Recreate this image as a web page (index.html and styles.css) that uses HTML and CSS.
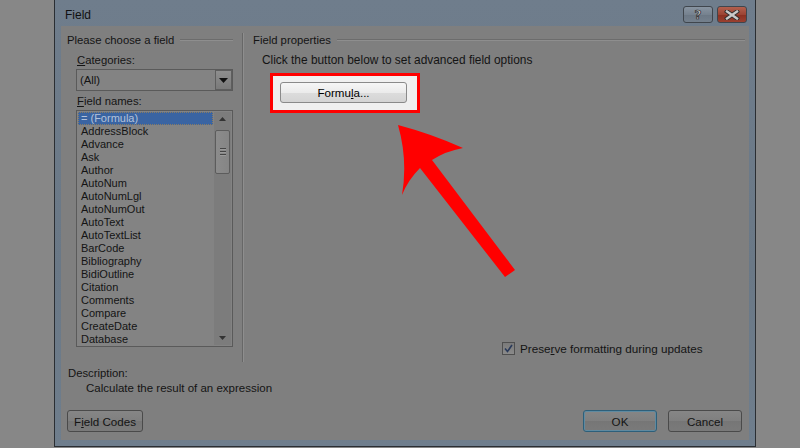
FILE: index.html
```html
<!DOCTYPE html>
<html>
<head>
<meta charset="utf-8">
<link rel="stylesheet" href="styles.css">
</head>
<body>
<div class="screen">
  <div class="dialog">
    <div class="titlebar">
      <span class="title">Field</span>
      <div class="tb-btns">
        <span class="tb-btn help"><span class="qmark">?</span></span>
        <span class="tb-btn close">
          <svg width="16" height="10" viewBox="0 0 16 10"><path d="M3 1.5 L13 8.5 M13 1.5 L3 8.5" stroke="#2e2e2e" stroke-width="4.2" stroke-linecap="square"/><path d="M3 1.5 L13 8.5 M13 1.5 L3 8.5" stroke="#c9c9c9" stroke-width="2.4" stroke-linecap="square"/></svg>
        </span>
      </div>
    </div>
    <div class="client">
      <div class="main">
        <div class="left">
          <div class="group-head"><span>Please choose a field</span><span class="rule"></span></div>
          <div class="lbl"><u>C</u>ategories:</div>
          <div class="select">
            <span class="select-val">(All)</span>
            <span class="select-btn"><svg width="9" height="5" viewBox="0 0 9 5"><path d="M0 0 H9 L4.5 5 Z" fill="#111"/></svg></span>
          </div>
          <div class="lbl lbl-names"><u>F</u>ield names:</div>
          <div class="listbox">
            <ul class="items">
              <li class="sel">= (Formula)</li>
              <li>AddressBlock</li>
              <li>Advance</li>
              <li>Ask</li>
              <li>Author</li>
              <li>AutoNum</li>
              <li>AutoNumLgl</li>
              <li>AutoNumOut</li>
              <li>AutoText</li>
              <li>AutoTextList</li>
              <li>BarCode</li>
              <li>Bibliography</li>
              <li>BidiOutline</li>
              <li>Citation</li>
              <li>Comments</li>
              <li>Compare</li>
              <li>CreateDate</li>
              <li>Database</li>
            </ul>
            <div class="scrollbar">
              <span class="sb-arrow"><svg width="7" height="4" viewBox="0 0 7 4"><path d="M0 4 L3.5 0 L7 4 Z" fill="#333"/></svg></span>
              <span class="thumb"><span class="grip"></span><span class="grip"></span><span class="grip"></span></span>
              <span class="sb-fill"></span>
              <span class="sb-arrow"><svg width="7" height="4" viewBox="0 0 7 4"><path d="M0 0 L7 0 L3.5 4 Z" fill="#333"/></svg></span>
            </div>
          </div>
        </div>
        <div class="vsep"></div>
        <div class="right">
          <div class="group-head"><span>Field properties</span><span class="rule"></span></div>
          <div class="hint">Click the button below to set advanced field options</div>
          <div class="highlight">
            <span class="btn formula">Formu<u>l</u>a...</span>
          </div>
          <div class="check-row">
            <span class="checkbox"><svg width="9" height="9" viewBox="0 0 9 9"><path d="M1 4.5 L3.5 7.5 L8 1" fill="none" stroke="#2a3a5a" stroke-width="1.6"/></svg></span>
            <span class="check-lbl">Prese<u>r</u>ve formatting during updates</span>
          </div>
        </div>
      </div>
      <div class="desc">
        <div class="desc-title">Description:</div>
        <div class="desc-text">Calculate the result of an expression</div>
      </div>
      <div class="footer">
        <span class="btn fbtn">F<u>i</u>eld Codes</span>
        <span class="spacer"></span>
        <span class="btn fbtn ok">OK</span>
        <span class="btn fbtn">Cancel</span>
      </div>
    </div>
  </div>
  <svg class="arrow" width="800" height="448" viewBox="0 0 800 448">
    <path d="M398 125 Q432 134 463 148 Q446 151 432 160 L515 270 L505 277 L420 168 Q408 180 402 195 Q408 160 398 125 Z" fill="#ff0000"/>
  </svg>
</div>
</body>
</html>
```

FILE: styles.css
```css
* { box-sizing: border-box; }
html, body { margin: 0; padding: 0; }
body { background: #878787; font-family: "Liberation Sans", Arial, sans-serif; font-size: 11.3px; color: #141414; }

.screen { position: relative; width: 800px; height: 448px; overflow: hidden; background: #878787; }

.dialog {
  margin-left: 54px; width: 702px; height: 447px;
  border: 1px solid #2a2e33; border-top: none;
  background: linear-gradient(#6f7d8c, #6a7886 60%, #6f7e8d);
  padding: 0 6px 6px 6px;
  display: flex; flex-direction: column;
}

.titlebar { height: 26px; display: flex; align-items: flex-start; flex: none; }
.title { font-size: 12px; line-height: 14px; margin-top: 8px; padding-left: 4px; color: #111; }
.tb-btns { margin-left: auto; margin-right: 2px; margin-top: 6px; display: flex; gap: 4px; }
.tb-btn { width: 30px; height: 17px; border: 1px solid #40464d; border-radius: 3px; display: flex; align-items: center; justify-content: center; }
.help { background: linear-gradient(#8894a1, #76828f 50%, #6b7784 51%, #74808d); }
.close { background: linear-gradient(#b2604e, #9c4434 50%, #8a2f20 51%, #9a4030); }
.qmark { font-family: "DejaVu Sans", sans-serif; font-weight: bold; font-size: 12px; line-height: 12px; color: #c6c6c6; -webkit-text-stroke: 0.7px #2a2a2a; }

.client { flex: 1; background: #7f7f7f; display: flex; flex-direction: column; }

.main { height: 336px; flex: none; display: flex; padding: 7px 0 0 6px; }
.left { width: 166px; display: flex; flex-direction: column; }
.vsep { width: 1px; background: #676767; box-shadow: 1px 0 0 #8e8e8e; margin: 0 0 0 9px; }
.right { width: 492px; margin-left: 10px; display: flex; flex-direction: column; }

.group-head { height: 14px; line-height: 14px; display: flex; align-items: center; white-space: nowrap; }
.group-head .rule { flex: 1; height: 2px; border-top: 1px solid #6c6c6c; border-bottom: 1px solid #8e8e8e; margin-left: 6px; }

.lbl { height: 14px; line-height: 14px; margin-left: 10px; margin-top: 6px; }
.lbl-names { margin-top: 3px; }
u { text-decoration: underline; text-underline-offset: 1px; }

.select { margin: 2px 0 0 9px; width: 157px; height: 22px; border: 1px solid #5a5a5a; background: #838383; display: flex; align-items: center; }
.select-val { padding-left: 3px; flex: 1; }
.select-btn { width: 17px; height: 20px; border: 1px solid #5e5e5e; background: linear-gradient(#8e8e8e, #7a7a7a); display: flex; align-items: center; justify-content: center; }

.listbox { margin: 2px 0 0 9px; width: 157px; height: 237px; border: 1px solid #5a5a5a; background: #838383; display: flex; padding: 1px; overflow: hidden; }
.items { list-style: none; margin: 0; padding: 0; flex: 1; overflow: hidden; font-size: 11px; }
.items li { height: 13px; line-height: 13px; padding-left: 3px; white-space: nowrap; }
.items li.sel { background: #3a64a2; color: #b4c2da; outline: 1px dotted #8a7c62; outline-offset: -1px; margin-right: 1px; }

.scrollbar { width: 17px; display: flex; flex-direction: column; align-items: center; background: #7c7c7c; }
.sb-arrow { height: 14px; display: flex; align-items: center; justify-content: center; flex: none; }
.thumb { width: 15px; height: 44px; margin-top: 4px; border: 1px solid #5c5c5c; border-radius: 2px; background: linear-gradient(90deg, #8c8c8c, #858585); display: flex; flex-direction: column; align-items: center; justify-content: center; gap: 1px; flex: none; }
.grip { width: 6px; height: 1px; background: #454545; box-shadow: 0 1px 0 #9a9a9a; margin-bottom: 1px; }
.sb-fill { flex: 1; }

.hint { height: 14px; line-height: 14px; margin: 6px 0 0 9px; white-space: nowrap; font-size: 11.9px; }

.highlight { margin: 6px 0 0 17px; width: 150px; height: 40px; border: 3px solid #ff0000; background: #f0f0f0; padding: 6px 0 0 7px; }

.btn { display: flex; align-items: center; justify-content: center; border: 1px solid #5a5a5a; border-radius: 3px; white-space: nowrap; }
.formula { width: 127px; height: 21px; border-color: #8a8a8a; background: linear-gradient(#f6f6f6, #ebebeb 50%, #dcdcdc 51%, #d4d4d4); color: #000; font-size: 11.6px; }

.check-row { margin-top: auto; margin-bottom: 7px; margin-left: 249px; height: 14px; display: flex; align-items: center; gap: 5px; white-space: nowrap; }
.check-lbl { font-size: 11.7px; }
.checkbox { width: 13px; height: 13px; border: 1px solid #4f4f4f; background: linear-gradient(#7a7a7a, #8a8a8a); display: flex; align-items: center; justify-content: center; }

.desc { padding: 4px 0 0 7px; flex: none; }
.desc-title { height: 14px; line-height: 14px; }
.desc-text { height: 14px; line-height: 14px; margin-top: 1px; padding-left: 18px; font-size: 11.5px; }

.footer { display: flex; margin-top: 15px; padding: 0 7px 0 6px; height: 22px; }
.fbtn { height: 22px; width: 74px; background: linear-gradient(#868686, #7f7f7f 50%, #767676 51%, #7a7a7a); border-color: #4a4a4a; font-size: 11.6px; }
.fbtn:first-child { width: 76px; }
.spacer { flex: 1; }
.ok { border-color: #2d5f7a; box-shadow: inset 0 0 0 1px #5f8aa0; margin-right: 11px; }

.arrow { position: absolute; left: 0; top: 0; pointer-events: none; }
```
